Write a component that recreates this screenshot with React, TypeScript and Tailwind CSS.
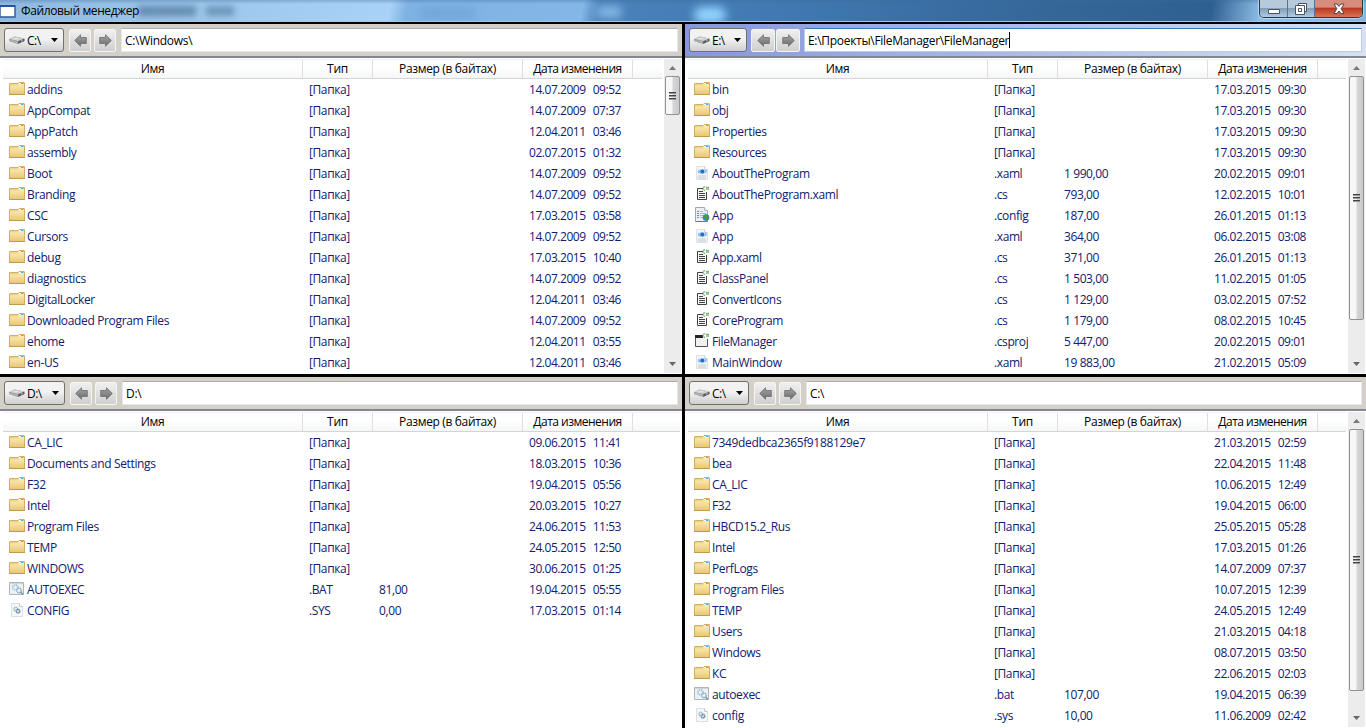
import React from 'react';

type IconKind = 'folder' | 'xaml' | 'cs' | 'config' | 'csproj' | 'bat' | 'sys';

interface Entry {
  icon: IconKind;
  name: string;
  type: string;
  size?: string;
  date: string;
}

interface PanelProps {
  drive: string;
  driveWidth: string;
  path: string;
  entries: Entry[];
  active?: boolean;
  thumbHeight?: string;
}

const folder = (name: string, date: string): Entry => ({ icon: 'folder', name, type: '[Папка]', date });

const file = (icon: IconKind, name: string, type: string, size: string, date: string): Entry => ({
  icon,
  name,
  type,
  size,
  date,
});

const windowsEntries: Entry[] = [
  folder('addins', '14.07.2009  09:52'),
  folder('AppCompat', '14.07.2009  07:37'),
  folder('AppPatch', '12.04.2011  03:46'),
  folder('assembly', '02.07.2015  01:32'),
  folder('Boot', '14.07.2009  09:52'),
  folder('Branding', '14.07.2009  09:52'),
  folder('CSC', '17.03.2015  03:58'),
  folder('Cursors', '14.07.2009  09:52'),
  folder('debug', '17.03.2015  10:40'),
  folder('diagnostics', '14.07.2009  09:52'),
  folder('DigitalLocker', '12.04.2011  03:46'),
  folder('Downloaded Program Files', '14.07.2009  09:52'),
  folder('ehome', '12.04.2011  03:55'),
  folder('en-US', '12.04.2011  03:46'),
];

const projectEntries: Entry[] = [
  folder('bin', '17.03.2015  09:30'),
  folder('obj', '17.03.2015  09:30'),
  folder('Properties', '17.03.2015  09:30'),
  folder('Resources', '17.03.2015  09:30'),
  file('xaml', 'AboutTheProgram', '.xaml', '1 990,00', '20.02.2015  09:01'),
  file('cs', 'AboutTheProgram.xaml', '.cs', '793,00', '12.02.2015  10:01'),
  file('config', 'App', '.config', '187,00', '26.01.2015  01:13'),
  file('xaml', 'App', '.xaml', '364,00', '06.02.2015  03:08'),
  file('cs', 'App.xaml', '.cs', '371,00', '26.01.2015  01:13'),
  file('cs', 'ClassPanel', '.cs', '1 503,00', '11.02.2015  01:05'),
  file('cs', 'ConvertIcons', '.cs', '1 129,00', '03.02.2015  07:52'),
  file('cs', 'CoreProgram', '.cs', '1 179,00', '08.02.2015  10:45'),
  file('csproj', 'FileManager', '.csproj', '5 447,00', '20.02.2015  09:01'),
  file('xaml', 'MainWindow', '.xaml', '19 883,00', '21.02.2015  05:09'),
];

const dEntries: Entry[] = [
  folder('CA_LIC', '09.06.2015  11:41'),
  folder('Documents and Settings', '18.03.2015  10:36'),
  folder('F32', '19.04.2015  05:56'),
  folder('Intel', '20.03.2015  10:27'),
  folder('Program Files', '24.06.2015  11:53'),
  folder('TEMP', '24.05.2015  12:50'),
  folder('WINDOWS', '30.06.2015  01:25'),
  file('bat', 'AUTOEXEC', '.BAT', '81,00', '19.04.2015  05:55'),
  file('sys', 'CONFIG', '.SYS', '0,00', '17.03.2015  01:14'),
];

const cEntries: Entry[] = [
  folder('7349dedbca2365f9188129e7', '21.03.2015  02:59'),
  folder('bea', '22.04.2015  11:48'),
  folder('CA_LIC', '10.06.2015  12:49'),
  folder('F32', '19.04.2015  06:00'),
  folder('HBCD15.2_Rus', '25.05.2015  05:28'),
  folder('Intel', '17.03.2015  01:26'),
  folder('PerfLogs', '14.07.2009  07:37'),
  folder('Program Files', '10.07.2015  12:39'),
  folder('TEMP', '24.05.2015  12:49'),
  folder('Users', '21.03.2015  04:18'),
  folder('Windows', '08.07.2015  03:50'),
  folder('КС', '22.06.2015  02:03'),
  file('bat', 'autoexec', '.bat', '107,00', '19.04.2015  06:39'),
  file('sys', 'config', '.sys', '10,00', '11.06.2009  02:42'),
];

function FileIcon({ kind }: { kind: IconKind }) {
  return (
    <svg width="16" height="16" viewBox="0 0 16 16" className="mb-px shrink-0">
      {kind === 'folder' && (
        <>
          <path d="M.5 13V3q0-.5.5-.5h8l1-1h5q.5 0 .5.5v11z" fill="#efd58c" stroke="#cfae68" />
          <path d="M10 2h5v1.5H9.2z" fill="#fffdf2" />
          <path d="M12 2.5h2.5" stroke="#35b5ea" />
          <path d="M1 4.5h8.5l1-1H15V13H1z" fill="url(#folderFace)" />
          <path d="M0 13.5h16" stroke="#c09a50" />
        </>
      )}
      {kind === 'xaml' && (
        <>
          <path d="M2.5 1.5h8l3 3v10h-11z" fill="#f5f6f7" stroke="#dfe2e4" />
          <path d="M10.5 1.5v3h3" fill="#fff" stroke="#ccd1d5" />
          <ellipse cx="8" cy="6.5" rx="4.2" ry="2.6" fill="#b5d8f8" />
          <path d="M4 5.5l1.5 1L4.5 8M11.5 4.5l.8 1.5-.8 2" stroke="#68a5e3" strokeWidth=".9" fill="none" />
          <circle cx="8.3" cy="6.5" r="2" fill="#236dc4" />
          <path d="M4 11.5l1-1 1 1 1-1 1 1 1-1 1 1 1-1 1 1M4 13h8" stroke="#b1b7bb" strokeWidth=".8" fill="none" />
        </>
      )}
      {kind === 'cs' && (
        <>
          <path d="M9 2.5H3.5v11h9V6" fill="#f7f7f7" stroke="#424242" />
          <path d="M5 5.5h4M5 7.5h6M5 9.5h6M5 11.5h6" stroke="#424242" />
          <path d="M11.2 .9H9.8L9 1.6v1.8l.8.8h1.4" fill="none" stroke="#4b9e4b" />
          <path d="M12 1.5h3M12 3h3M12.8.5v3.5M14.2.5v3.5" stroke="#5fae5f" strokeWidth=".7" />
        </>
      )}
      {kind === 'config' && (
        <>
          <path d="M1.5.5h9l3 3v11h-12z" fill="#e9f1fa" stroke="#91adc8" />
          <path d="M10.5.5v3h3" fill="#fff" stroke="#a4bbd1" />
          <path d="M1.5 14.5h12" stroke="#587c9e" />
          <path d="M3 4.5h2M3 6.5h2M3 8.5h2M3 10.5h2" stroke="#658fc5" />
          <path d="M6 4.5h3M6 6.5h6M6 8.5h4M6 10.5h3" stroke="#a2b9d9" />
          <circle cx="12" cy="10.5" r="3.3" fill="#3c87b4" />
          <path d="M9 9l3-1.8 3.2 2-2 1.3.5 2.5-1.7 1.2-1.2-2.8z" fill="#3e9d4b" />
        </>
      )}
      {kind === 'csproj' && (
        <>
          <path d="M1.5 3v10.5h12V6" fill="#f1eff1" stroke="#515151" />
          <path d="M13.5 6v7" stroke="#515151" />
          <path d="M1 2h8v3H1z" fill="#252526" />
          <path d="M11.2 .9H9.8L9 1.6v1.8l.8.8h1.4" fill="none" stroke="#4b9e4b" />
          <path d="M12 1.5h3M12 3h3M12.8.5v3.5M14.2.5v3.5" stroke="#5fae5f" strokeWidth=".7" />
        </>
      )}
      {kind === 'bat' && (
        <>
          <path d="M.5 1.5h14v12H.5z" fill="#eef1f3" stroke="#b0b4b7" />
          <path d="M1 2.5h13" stroke="#d0d6da" />
          <circle cx="6.3" cy="6.3" r="2.5" fill="#e6f4fb" stroke="#a0c6dc" strokeWidth="1.7" strokeDasharray="1.4 .6" />
          <circle cx="10" cy="9.5" r="2.2" fill="#f3f8fb" stroke="#86a9c2" strokeWidth="1.5" strokeDasharray="1.2 .5" />
          <path d="M11.5 11l2.5 2.5" stroke="#6d8ea8" strokeWidth="1.3" />
        </>
      )}
      {kind === 'sys' && (
        <>
          <path d="M2.5 1.5h8l3 3v10h-11z" fill="#f7f8f8" stroke="#dcdfe0" />
          <path d="M10.5 1.5v3h3" fill="#fff" stroke="#c6cbce" />
          <circle cx="6.8" cy="7" r="1.9" fill="#d9edf7" stroke="#9bb8cb" strokeWidth="1.4" strokeDasharray="1.2 .4" />
          <circle cx="9" cy="9.2" r="1.8" fill="#d3e1ec" stroke="#68859f" strokeWidth="1.4" strokeDasharray="1.2 .4" />
        </>
      )}
    </svg>
  );
}

function DriveIcon() {
  return (
    <svg width="16" height="16" viewBox="0 0 16 16" className="shrink-0">
      <path d="M0 7.2L5.5 4.4 15.5 6.5v2.6L9.3 12 .6 9.3z" fill="#8a8a8a" />
      <path d="M.3 7L5.6 4.6 15.2 6.6 9 9z" fill="#d4d4d4" />
      <ellipse cx="7" cy="6.8" rx="3.6" ry="1.2" fill="#eee" stroke="#aaa" strokeWidth=".6" />
      <path d="M.5 7.6L9 9.4v2.2L.9 9.2z" fill="#b0b0b0" />
      <path d="M9.3 9.5l6-2.5v2l-6 2.6z" fill="#555" />
      <path d="M12 9.2l1.6-.7" stroke="#b6e2b6" />
    </svg>
  );
}

function NavButton({ forward, active }: { forward?: boolean; active?: boolean }) {
  return (
    <div
      className={`flex h-[23px] items-center justify-center rounded-[2px] border border-[#f4f4f4] bg-linear-to-b from-[#f0f0f0] to-[#cfcfcf] ${
        active ? 'w-6' : 'w-[22px]'
      }`}
    >
      <svg width="13" height="13" viewBox="0 0 13 13" className={forward ? '-scale-x-100' : ''}>
        <path d="M.7 6.5L6.5.8v2.7h5.8v6H6.5v2.7z" fill="url(#arrowFace)" stroke="#6c6c6c" strokeWidth=".8" />
      </svg>
    </div>
  );
}

function ScrollBar({ thumbHeight }: { thumbHeight: string }) {
  return (
    <div className="mt-px mb-px flex w-[17px] shrink-0 flex-col items-center bg-[#ececec]">
      <div className="flex h-[17px] shrink-0 items-center">
        <svg width="7" height="4" viewBox="0 0 7 4">
          <path d="M0 4L3.5 0 7 4z" fill="#777" />
        </svg>
      </div>
      <div
        className={`flex w-[15px] shrink-0 flex-col items-center justify-center gap-px rounded-[2px] border border-[#929292] bg-linear-to-r from-[#f7f7f7] from-45% via-[#d5d5d7] via-55% to-[#cacacc] ${thumbHeight}`}
      >
        <div className="h-0.5 w-[7px] border-b border-[#999] bg-[#444]" />
        <div className="h-0.5 w-[7px] border-b border-[#999] bg-[#444]" />
        <div className="h-0.5 w-[7px] border-b border-[#999] bg-[#444]" />
      </div>
      <div className="mt-auto flex h-[18px] shrink-0 items-center">
        <svg width="7" height="4" viewBox="0 0 7 4">
          <path d="M0 0L3.5 4 7 0z" fill="#666" />
        </svg>
      </div>
    </div>
  );
}

function Panel({ drive, driveWidth, path, entries, active, thumbHeight }: PanelProps) {
  return (
    <section className="flex min-w-0 flex-col overflow-hidden bg-white">
      <div
        className={`flex h-8 shrink-0 items-center pr-[4px] pl-1 ${
          active ? 'bg-linear-to-r from-[#8697dc] to-[#d9e0f0]' : 'bg-[#d4d0c8]'
        }`}
      >
        <div
          className={`flex h-6 shrink-0 items-center rounded-[3px] border border-[#707070] bg-linear-to-b from-[#f2f2f2] from-45% to-[#cfcfcf] pl-1 ${driveWidth}`}
        >
          <DriveIcon />
          <span className="mt-0.5 ml-[2px] tracking-[-0.5px]">{drive}</span>
          <svg width="7" height="4" viewBox="0 0 7 4" className="mr-[5px] ml-auto">
            <path d="M0 0h7L3.5 4z" fill="#000" />
          </svg>
        </div>
        <div className={`flex shrink-0 ${active ? 'mx-1 gap-px' : 'mx-[5px] gap-[3px]'}`}>
          <NavButton active={active} />
          <NavButton active={active} forward />
        </div>
        <div
          className={`flex h-6 flex-1 items-center border bg-white pl-[3px] ${
            active ? 'border-[#b5cfe7] border-t-[#3d7bad]' : 'border-[#e3e9ef] border-t-[#abadb3]'
          }`}
        >
          <span className="mt-px whitespace-pre">{path}</span>
          {active && <span className="h-4 w-px bg-black" />}
        </div>
      </div>
      <div className="h-0.5 shrink-0 bg-[#828790]" />
      <div className="flex min-h-0 flex-1">
        <div className="min-w-0 flex-1 overflow-hidden pr-0.5 pl-[3px]">
          <div className="mt-px flex h-5 border-t border-b border-t-[#f1f1f1] border-b-[#d5d5d5] bg-linear-to-b from-white from-40% to-[#f5f6f7] text-center leading-[18px] text-black">
            <div className="w-[300px] border-r border-[#dfdfdf]">Имя</div>
            <div className="w-[70px] border-r border-[#dfdfdf]">Тип</div>
            <div className="w-[150px] border-r border-[#dfdfdf] tracking-[-0.35px]">Размер (в байтах)</div>
            <div className="w-[110px] border-r border-[#dfdfdf] tracking-[-0.5px]">Дата изменения</div>
          </div>
          {entries.map((entry, i) => (
            <div key={i} className="flex h-[21px] items-center pl-1.5 whitespace-pre text-[#10206e]">
              <div className="flex w-[300px] shrink-0 items-center gap-0.5 tracking-[-0.35px]">
                <FileIcon kind={entry.icon} />
                {entry.name}
              </div>
              <div className="w-[70px] shrink-0 tracking-[-0.4px]">{entry.type}</div>
              <div className="w-[150px] shrink-0 tracking-[-0.4px]">{entry.size}</div>
              <div className="shrink-0 tracking-[-0.45px] [word-spacing:0.8px]">{entry.date}</div>
            </div>
          ))}
        </div>
        {thumbHeight && <ScrollBar thumbHeight={thumbHeight} />}
        {thumbHeight && <div className="w-px shrink-0" />}
      </div>
    </section>
  );
}

function TitleBar() {
  return (
    <header className="relative flex h-[22px] items-center overflow-hidden border-b border-[#a9c4dc] bg-[linear-gradient(100deg,#8fb9e0_0px,#9cc6eb_200px,#a9d2f8_385px,#7fb3e4_402px,#84b7e8_575px,#4a82bb_592px,#3f77b0_800px,#356799_1030px,#2f6092_1195px,#8fc0ea_1245px,#7fb1dd_1366px)]">
      <div className="absolute inset-x-0 top-0 h-1 bg-linear-to-b from-[#3c6a98]/35 to-transparent" />
      <div className="absolute top-[6px] left-[138px] h-2.5 w-[58px] bg-[#42688c]/60 blur-[3px]" />
      <div className="absolute top-[6px] left-[206px] h-2.5 w-7 bg-[#42688c]/50 blur-[3px]" />
      <div className="absolute top-[7px] left-[420px] h-3 w-[55px] bg-[#5e92c8]/40 blur-[4px]" />
      <div className="absolute top-[6px] left-[597px] h-3 w-6 bg-[#9acdf5]/70 blur-[4px]" />
      <div className="absolute top-[7px] left-[694px] h-4 w-8 rounded-full bg-[#92d4ff] blur-[5px]" />
      <svg width="16" height="16" viewBox="0 0 16 16" className="relative mt-0.5">
        <path d="M0 2h15v11H0z" fill="#fff" stroke="#2c5a92" strokeWidth="1.4" />
        <path d="M0 2h15" stroke="#1f4fa5" strokeWidth="1.8" />
      </svg>
      <h1 className="relative mt-px ml-[5px] tracking-[-0.38px] text-black">Файловый менеджер</h1>
      <div className="absolute top-0 right-[3px] flex h-[18px] w-[104px] overflow-hidden rounded-b-[5px] border border-t-0 border-[#26384a] shadow-[0_0_0_1px_#ffffff66]">
        <div className="flex w-7 items-center justify-center border-r border-[#5b7389] bg-linear-to-b from-[#b6cadc] from-45% via-[#84a0b9] via-50% to-[#afcce3]">
          <svg width="14" height="14" viewBox="0 0 14 14">
            <path d="M1.5 7.5h11v4h-11z" fill="#fff" stroke="#485461" />
          </svg>
        </div>
        <div className="flex w-[27px] items-center justify-center border-r border-[#5b7389] bg-linear-to-b from-[#b6cadc] from-45% via-[#84a0b9] via-50% to-[#afcce3]">
          <svg width="14" height="14" viewBox="0 0 14 14">
            <path d="M4.5 1.5h8v8h-8z" fill="#fff" stroke="#485461" />
            <path d="M1.5 3.5h9v9h-9zM4.5 6.5v3h3v-3z" fill="#fff" stroke="#485461" fillRule="evenodd" />
          </svg>
        </div>
        <div className="flex flex-1 items-center justify-center bg-linear-to-b from-[#d88c7c] from-40% via-[#b83a24] via-50% to-[#dc7350]">
          <svg width="14" height="12" viewBox="0 0 14 12">
            <path d="M2 1h3L7 3.4 9 1h3L9.2 5.7l2.8 4.8H9L7 8l-2 2.5H2l2.8-4.8z" fill="#fff" stroke="#4e4648" />
          </svg>
        </div>
      </div>
    </header>
  );
}

export default function App() {
  return (
    <div className="flex h-[728px] w-[1366px] flex-col overflow-hidden bg-black font-['Open_Sans','Noto_Sans',sans-serif] text-[12px] leading-4 tracking-[-0.3px] text-black">
      <svg width="0" height="0" className="absolute">
        <defs>
          <linearGradient id="folderFace" x1="0" y1="0" x2="0" y2="1">
            <stop offset="0" stopColor="#fbeab0" />
            <stop offset="1" stopColor="#e9c778" />
          </linearGradient>
          <linearGradient id="arrowFace" x1="0" y1="0" x2="0" y2="1">
            <stop offset="0" stopColor="#a5a5a5" />
            <stop offset="1" stopColor="#6b6b6b" />
          </linearGradient>
        </defs>
      </svg>
      <TitleBar />
      <main className="mt-0.5 grid min-h-0 flex-1 grid-cols-[682px_681px] grid-rows-[350px_351px] gap-[3px]">
        <Panel drive="C:\" driveWidth="w-[60px]" path="C:\Windows\" entries={windowsEntries} thumbHeight="h-[39px]" />
        <Panel drive="E:\" driveWidth="w-[58px]" path="E:\Проекты\FileManager\FileManager" entries={projectEntries} thumbHeight="h-[244px]" active />
        <Panel drive="D:\" driveWidth="w-[61px]" path="D:\" entries={dEntries} />
        <Panel drive="C:\" driveWidth="w-[60px]" path="C:\" entries={cEntries} thumbHeight="h-[262px]" />
      </main>
    </div>
  );
}
